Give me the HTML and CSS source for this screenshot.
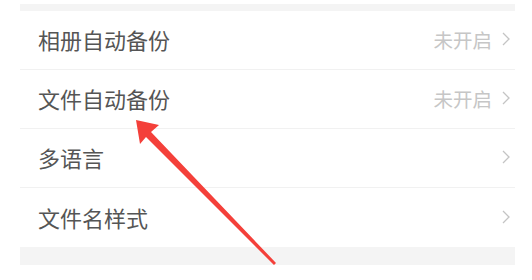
FILE: index.html
```html
<!DOCTYPE html>
<html lang="zh-CN">
<head>
<meta charset="utf-8">
<link rel="stylesheet" href="styles.css">
</head>
<body>
<div class="page">
  <div class="panel">
    <div class="strip strip-top"></div>
    <div class="list">
      <div class="row"><span class="label">相册自动备份</span><span class="value">未开启<svg class="chev" viewBox="0 0 10 16"><path d="M2 2 L8 8 L2 14" /></svg></span></div>
      <div class="row"><span class="label">文件自动备份</span><span class="value">未开启<svg class="chev" viewBox="0 0 10 16"><path d="M2 2 L8 8 L2 14" /></svg></span></div>
      <div class="row"><span class="label">多语言</span><span class="value"><svg class="chev" viewBox="0 0 10 16"><path d="M2 2 L8 8 L2 14" /></svg></span></div>
      <div class="row last"><span class="label">文件名样式</span><span class="value"><svg class="chev" viewBox="0 0 10 16"><path d="M2 2 L8 8 L2 14" /></svg></span></div>
    </div>
    <div class="strip strip-bottom"></div>
  </div>
  <svg class="arrow" width="532" height="280" viewBox="0 0 532 280">
    <polygon points="136,120 159,125 151,132 276,263 274,265 146,137 140,144" />
  </svg>
</div>
</body>
</html>
```

FILE: styles.css
```css
html, body {
  margin: 0;
  padding: 0;
  background: #ffffff;
}
.page {
  position: relative;
  width: 532px;
  height: 280px;
  overflow: hidden;
  font-family: "Noto Sans CJK SC", "Noto Sans", sans-serif;
}
.panel {
  margin: 0 17px 0 20px;
  padding-top: 4px;
}
.strip {
  background: #f4f4f4;
}
.strip-top {
  height: 7px;
}
.strip-bottom {
  height: 18px;
}
.list {
  display: flex;
  flex-direction: column;
}
.row {
  border-bottom: 1px solid #f1f1f1;
  display: flex;
  align-items: center;
  justify-content: space-between;
  padding: 0 4px 2px 18px;
  box-sizing: content-box;
  height: 56px;
}
.row.last {
  border-bottom: none;
  height: 57px;
}
.label {
  font-size: 22px;
  color: #555555;
}
.value {
  display: flex;
  align-items: center;
  gap: 9px;
  font-size: 19.5px;
  color: #c6c6c6;
}
.chev {
  width: 10px;
  height: 16px;
  fill: none;
  stroke: #c4c4c4;
  stroke-width: 1.3;
}
.arrow {
  position: absolute;
  left: 0;
  top: 0;
}
.arrow polygon {
  fill: #f4403a;
}
```
